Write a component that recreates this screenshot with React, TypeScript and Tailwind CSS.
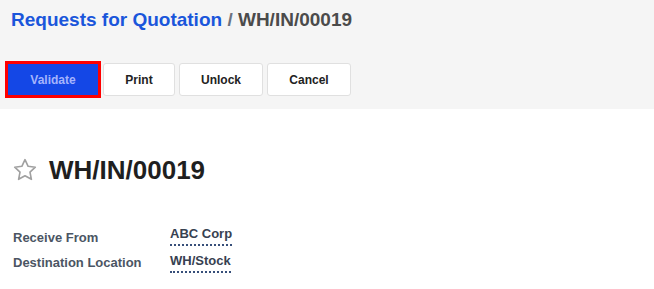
export default function App() {
  return (
    <div className="w-[654px] h-[289px] bg-white font-['Liberation_Sans',Arial,sans-serif]">
      <div className="bg-[#f5f5f5] h-[109px] px-[11px] pt-[8px]">
        <h1 className="text-[19px] font-bold leading-[24px]">
          <span className="text-[#1a56db]">Requests for Quotation</span>
          <span className="text-[#6b7280]"> / </span>
          <span className="text-[#4b4b4b]">WH/IN/00019</span>
        </h1>
        <div className="flex items-center mt-[29px] -ml-[6px]">
          <div className="border-[3px] border-[#ff0000]">
            <button className="w-[90px] h-[31px] bg-[#1447e6] text-[#a5b4fc] text-[12px] font-bold">
              Validate
            </button>
          </div>
          <div className="flex gap-[4px] ml-[2px]">
            <button className="w-[72px] h-[33px] bg-white border border-[#e0e0e0] rounded-[3px] text-[12px] font-bold text-[#222]">
              Print
            </button>
            <button className="w-[84px] h-[33px] bg-white border border-[#e0e0e0] rounded-[3px] text-[12px] font-bold text-[#222]">
              Unlock
            </button>
            <button className="w-[84px] h-[33px] bg-white border border-[#e0e0e0] rounded-[3px] text-[12px] font-bold text-[#222]">
              Cancel
            </button>
          </div>
        </div>
      </div>
      <div className="px-[12px] pt-[46px]">
        <div className="flex items-center gap-[11px]">
          <svg width="26" height="26" viewBox="0 0 24 24" fill="none" stroke="#a0a0a0" strokeWidth="1.5" strokeLinejoin="round">
            <path d="M12 2.5l2.9 6.1 6.6.8-4.9 4.6 1.3 6.6L12 17.3l-5.9 3.3 1.3-6.6-4.9-4.6 6.6-.8z" />
          </svg>
          <h2 className="text-[26px] font-bold text-[#1f1f1f] leading-[30px]">WH/IN/00019</h2>
        </div>
        <div className="mt-[41px] grid grid-cols-[158px_1fr] gap-y-[7px] text-[13px] font-bold leading-[16px]">
          <div className="text-[#4b5563] pl-[1px] self-end">Receive From</div>
          <div>
            <span className="text-[#374151] border-b-2 border-dotted border-[#374f7a] inline-block pb-[2px]">ABC Corp</span>
          </div>
          <div className="text-[#4b5563] pl-[1px] self-end pb-[2px]">Destination Location</div>
          <div>
            <span className="text-[#374151] border-b-2 border-dotted border-[#374f7a] inline-block pb-[2px]">WH/Stock</span>
          </div>
        </div>
      </div>
    </div>
  );
}
